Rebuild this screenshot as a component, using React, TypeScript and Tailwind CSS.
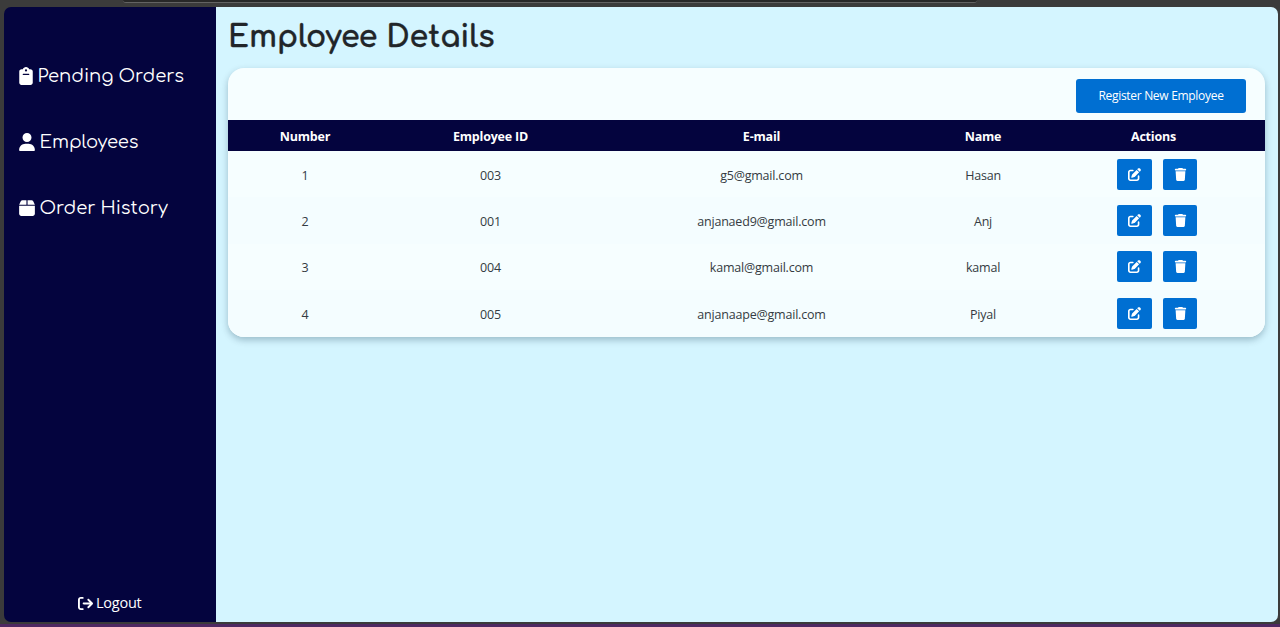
import { FaArrowRightFromBracket, FaBox, FaClipboard, FaPenToSquare, FaTrash, FaUser } from 'react-icons/fa6';

const employees = [
  { id: '003', email: 'g5@gmail.com', name: 'Hasan' },
  { id: '001', email: 'anjanaed9@gmail.com', name: 'Anj' },
  { id: '004', email: 'kamal@gmail.com', name: 'kamal' },
  { id: '005', email: 'anjanaape@gmail.com', name: 'Piyal' },
];

function Sidebar() {
  return (
    <aside className="flex w-[212px] shrink-0 flex-col bg-[#04043e] text-white">
      <nav className="flex flex-col gap-[36px] pt-[54px] pl-[15px] font-['Comfortaa','Quicksand','Lato',sans-serif] text-[18px] leading-[30px] tracking-[-0.06px]">
        <a className="flex items-center gap-[5px]">
          <FaClipboard className="h-[18px] w-[14px]" />
          <span className="pt-px leading-[29px]">Pending Orders</span>
        </a>
        <a className="flex items-center gap-[5px]">
          <FaUser className="h-[18px] w-4" />
          <span className="pt-px leading-[29px]">Employees</span>
        </a>
        <a className="flex items-center gap-[5px]">
          <FaBox className="h-[18px] w-4" />
          <span className="pt-px leading-[29px]">Order History</span>
        </a>
      </nav>
      <a className="mt-auto mb-[7px] flex items-center gap-[3.5px] pl-[74px] text-[14.5px] leading-6 tracking-[-0.25px]">
        <FaArrowRightFromBracket className="size-[15px]" />
        <span>Logout</span>
      </a>
    </aside>
  );
}

function EmployeeTable() {
  return (
    <table className="w-full table-fixed border-collapse text-center text-[12.5px] tracking-[-0.2px]">
      <colgroup>
        <col className="w-[154px]" />
        <col className="w-[217px]" />
        <col className="w-[325px]" />
        <col className="w-[118px]" />
        <col className="w-[223px]" />
      </colgroup>
      <thead>
        <tr className="h-[31px] bg-[#04043e] text-white">
          <th className="pt-[3px]">Number</th>
          <th className="pt-[3px]">Employee ID</th>
          <th className="pt-[3px]">E-mail</th>
          <th className="pt-[3px]">Name</th>
          <th className="pt-[3px]">Actions</th>
        </tr>
      </thead>
      <tbody className="text-[#343b42]">
        {employees.map((employee, index) => (
          <tr key={employee.id} className="h-[46.4px] even:bg-[#f4fdff]">
            <td className="pt-[3.5px]">{index + 1}</td>
            <td className="pt-[3.5px]">{employee.id}</td>
            <td className="pt-[3.5px]">{employee.email}</td>
            <td className="pt-[3.5px]">{employee.name}</td>
            <td>
              <div className="flex items-center justify-center gap-[11px] pl-[7px]">
                <button className="flex h-[31px] w-[35px] items-center justify-center rounded-[2px] bg-[#006fd2] text-white">
                  <FaPenToSquare className="size-[13px]" />
                </button>
                <button className="flex h-[31px] w-[34.5px] items-center justify-center rounded-[2px] bg-[#006fd2] text-white">
                  <FaTrash className="size-[13px]" />
                </button>
              </div>
            </td>
          </tr>
        ))}
      </tbody>
    </table>
  );
}

export default function App() {
  return (
    <div className="flex h-[627px] w-[1280px] flex-col overflow-hidden bg-[#3b3b3b] font-['Open_Sans','Noto_Sans',sans-serif]">
      <div className="flex h-[7px] shrink-0 justify-center pr-[180px]">
        <div className="h-[3px] w-[854px] rounded-b-[10px] border-b border-[#636363] bg-[#282828]" />
      </div>
      <div className="mr-[2px] ml-[3.5px] flex h-[615px] shrink-0 overflow-hidden rounded-[7px]">
        <Sidebar />
        <main className="flex-1 bg-[#d4f5ff] pr-[13px] pl-[12.5px]">
          <h1 className="pt-[12px] font-['Comfortaa','Quicksand','Lato',sans-serif] text-[30px] leading-[38px] font-bold tracking-[-0.06px] text-[#212529] [-webkit-text-stroke:0.3px_#212529]">
            Employee Details
          </h1>
          <section className="mt-[11px] overflow-hidden rounded-2xl bg-[#f6feff] shadow-[0_3px_7px_rgba(0,40,60,0.28)]">
            <div className="flex h-[52px] justify-end pt-[11px] pr-[19px]">
              <button className="h-[34px] w-[170px] rounded-[3px] bg-[#006fd2] text-[12px] tracking-[-0.3px] text-white">
                Register New Employee
              </button>
            </div>
            <EmployeeTable />
          </section>
        </main>
      </div>
      <div className="mt-[2px] h-[3px] shrink-0 bg-[#4f2862]" />
    </div>
  );
}
